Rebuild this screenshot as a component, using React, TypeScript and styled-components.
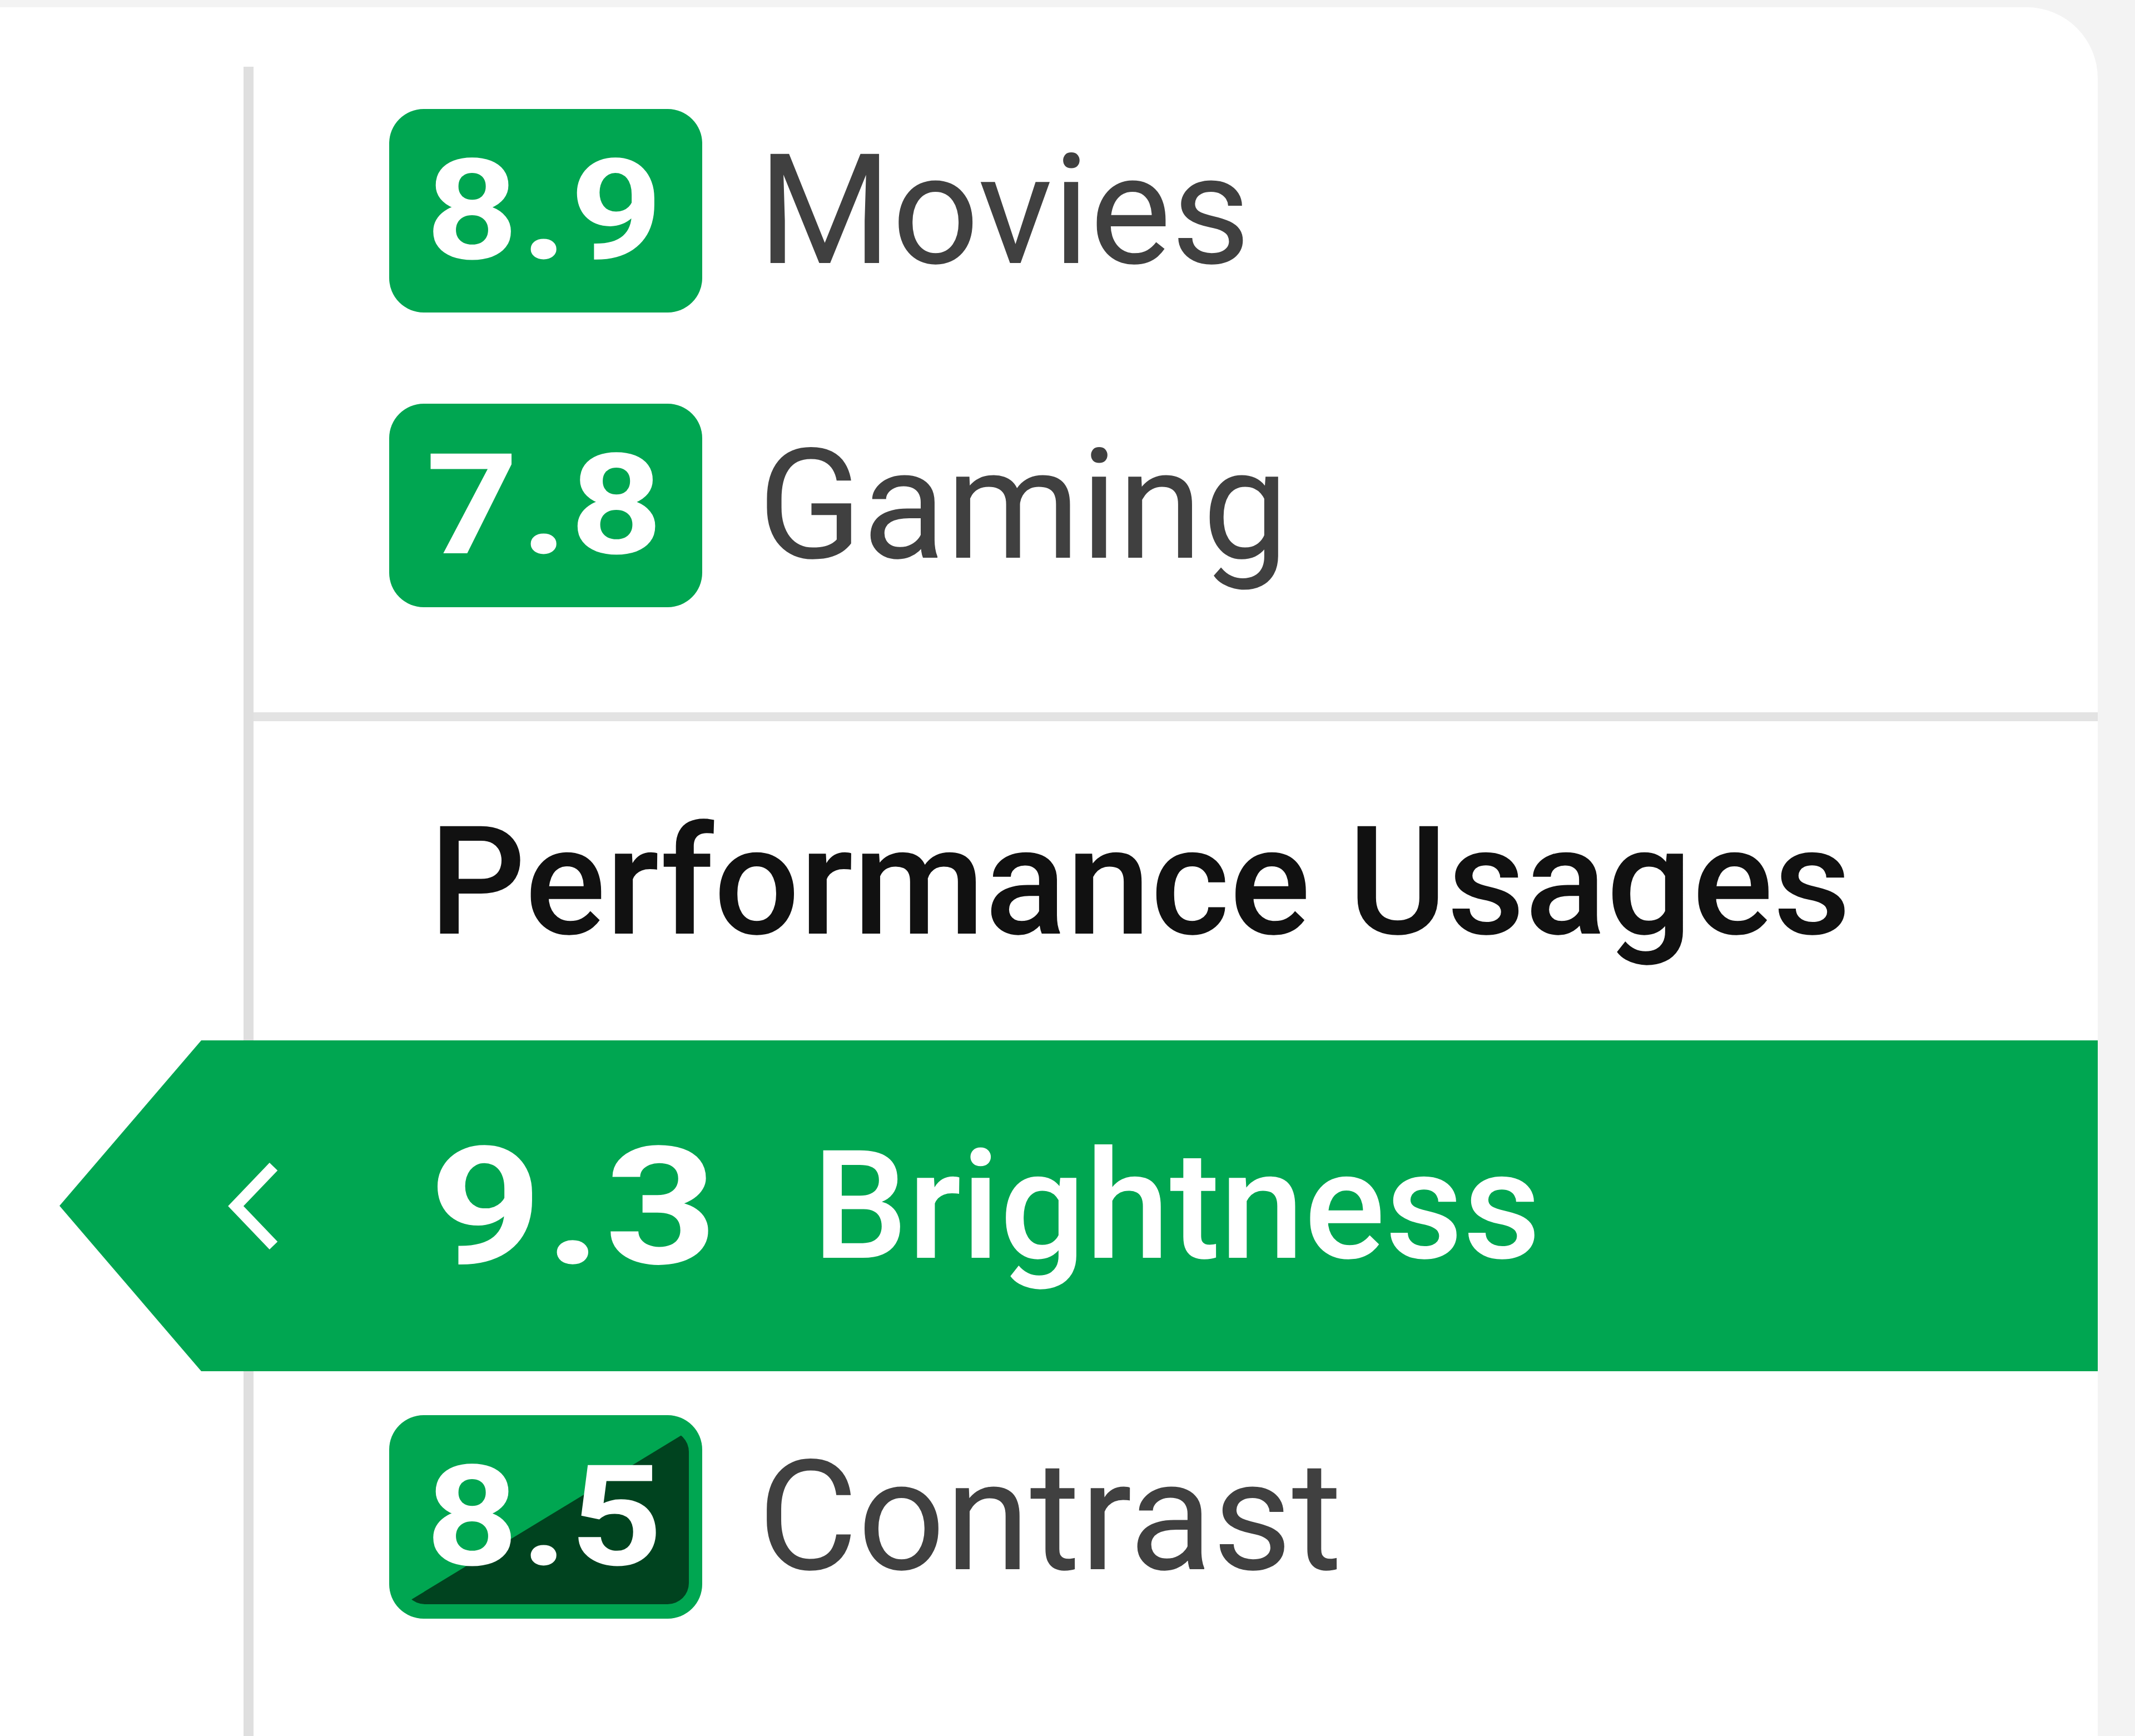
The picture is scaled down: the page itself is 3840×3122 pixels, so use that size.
import React from "react";
import styled, { createGlobalStyle, css } from "styled-components";

const GlobalStyle = createGlobalStyle`
  html,
  body {
    margin: 0;
    padding: 0;
    background: #f3f3f3;
    font-family: Roboto, "Noto Sans", "Liberation Sans", sans-serif;
  }
`;

const green = "#00a651";

const Screen = styled.div`
  width: 3840px;
  height: 3122px;
  padding-top: 13px;
  box-sizing: border-box;
  overflow: hidden;
`;

const Card = styled.div`
  width: 3773px;
  height: 3109px;
  background: #fff;
  border-top-right-radius: 128px;
  padding-top: 107px;
  box-sizing: border-box;
  overflow: hidden;
`;

const Column = styled.div`
  margin-left: 438px;
  border-left: 18px solid #dfdfdf;
  height: 100%;
  display: flex;
  flex-direction: column;
`;

const ScoreList = styled.div`
  display: flex;
  flex-direction: column;
  gap: 164px;
  padding: 76px 0 0 244px;
`;

const Row = styled.div<{ $top?: number }>`
  display: flex;
  align-items: center;
  gap: 100px;
  padding-left: ${(p) => (p.$top !== undefined ? "244px" : "0")};
  margin-top: ${(p) => p.$top ?? 0}px;
`;

const Badge = styled.div<{ $split?: boolean }>`
  position: relative;
  flex: none;
  width: 563px;
  height: 366px;
  border-radius: 62px;
  background: ${green};
  color: #fff;
  display: flex;
  align-items: center;
  justify-content: center;
  ${(p) =>
    p.$split &&
    css`
      &::after {
        content: "";
        position: absolute;
        inset: 28px 24px 26px 26px;
        border-radius: 38px;
        background: #00431f;
        clip-path: polygon(100% 0, 100% 100%, 0 100%);
      }
    `}
`;

// score digits are set wide, like the numerals in the shot
const ScoreText = styled.span<{ $size: number; $stretch: number }>`
  position: relative;
  z-index: 1;
  display: inline-block;
  font-size: ${(p) => p.$size}px;
  font-weight: 700;
  line-height: 1;
  letter-spacing: 4px;
  transform: scaleX(${(p) => p.$stretch});
`;

const Label = styled.span`
  font-size: 276px;
  font-weight: 400;
  line-height: 1;
  color: #404040;
`;

const Divider = styled.div`
  height: 16px;
  background: #e3e3e3;
  margin-top: 189px;
`;

const Heading = styled.h3`
  margin: 131px 0 0 316px;
  font-size: 272px;
  font-weight: 500;
  line-height: 317px;
  color: #111;
  white-space: nowrap;
`;

const Banner = styled.div`
  margin: 126px 0 0 -349px;
  height: 595px;
  background: ${green};
  color: #fff;
  display: flex;
  align-items: center;
  padding-left: 299px;
  clip-path: polygon(255px 0, 100% 0, 100% 100%, 255px 100%, 0 50%);
`;

const Chevron = styled.svg`
  flex: none;
  width: 100px;
  height: 170px;
`;

const BannerScore = styled.div`
  margin: 6px 0 0 266px;
  display: flex;

  & > span {
    transform-origin: left center;
  }
`;

const BannerLabel = styled.span`
  margin-left: 253px;
  font-size: 272px;
  font-weight: 500;
  line-height: 1;
`;

type Score = { value: string; label: string };

const usages: Score[] = [
  { value: "8.9", label: "Movies" },
  { value: "7.8", label: "Gaming" },
];

export default function App() {
  return (
    <>
      <GlobalStyle />
      <Screen>
        <Card>
          <Column>
            <ScoreList>
              {usages.map((s) => (
                <Row key={s.label}>
                  <Badge>
                    <ScoreText $size={252} $stretch={1.15}>
                      {s.value}
                    </ScoreText>
                  </Badge>
                  <Label>{s.label}</Label>
                </Row>
              ))}
            </ScoreList>
            <Divider />
            <Heading>Performance Usages</Heading>
            <Banner>
              <Chevron viewBox="0 0 100 170">
                <polyline
                  points="86,14 18,85 86,156"
                  fill="none"
                  stroke="#fff"
                  strokeWidth="20"
                />
              </Chevron>
              <BannerScore>
                <ScoreText $size={295} $stretch={1.2}>
                  9.3
                </ScoreText>
              </BannerScore>
              <BannerLabel>Brightness</BannerLabel>
            </Banner>
            <Row $top={79}>
              <Badge $split>
                <ScoreText $size={252} $stretch={1.15}>
                  8.5
                </ScoreText>
              </Badge>
              <Label>Contrast</Label>
            </Row>
          </Column>
        </Card>
      </Screen>
    </>
  );
}
